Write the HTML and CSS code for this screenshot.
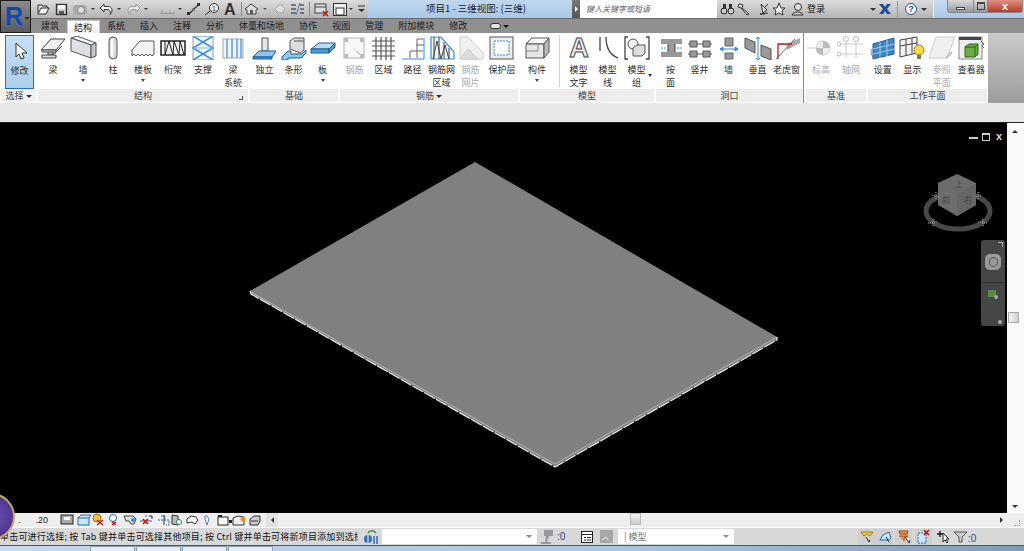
FILE: index.html
```html
<!DOCTYPE html>
<html>
<head>
    <title>项目1 - 三维视图: {三维}</title>
    <link rel="stylesheet" href="styles.css">
</head>
<body>
<div class="app">
    <div class="app-button"><span class="app-logo">R</span><span class="caret app-caret"></span></div>

    <div class="title-bar">
        <svg class="qat" width="334" height="18" viewBox="34 0 334 18">
            <path d="M38 13V5h4l1 1h4v2" fill="#ddd" stroke="#333"/><path d="M38 14l3-6h8l-3 6z" fill="#f2f2f2" stroke="#333"/>
            <rect x="56.500" y="4.500" width="10" height="10" fill="#ccc" stroke="#333" stroke-width="1.400"/><rect x="58" y="5" width="7" height="4" fill="#fff"/><rect x="59" y="11" width="5" height="3" fill="#555"/>
            <path d="M75 5h10l2 3v5l-2 2H75l-2-3V7z" fill="#aaa"/><circle cx="81" cy="10" r="3.500" fill="#ddd" stroke="#888"/>
            <polygon points="91,8 95,8 93,10" fill="#333"/>
            <path d="M100 8l4-4v2.500h4c4 0 5 4 3 7l-1 1c1-3 0-5-3-5h-3V12z" fill="#fff" stroke="#333"/>
            <polygon points="117,8 121,8 119,10" fill="#333"/>
            <path d="M140 8l-4-4v2.500h-4c-4 0-5 4-3 7l1 1c-1-3 0-5 3-5h3V12z" fill="#e6e6e6" stroke="#999"/>
            <polygon points="144,8 148,8 146,10" fill="#333"/>
            <path d="M160 13.500h15M162 13.500v-3M166 13.500v-2M170 13.500v-3M174 13.500v-2" stroke="#999" fill="none"/>
            <polygon points="178,8 182,8 180,10" fill="#333"/>
            <path d="M189 14l10-10" stroke="#333" stroke-width="1.200"/><rect x="187" y="12" width="3" height="3" fill="#333"/><rect x="197" y="3" width="3" height="3" fill="#333"/><path d="M192 8l3 3" stroke="#777"/>
            <circle cx="214" cy="8" r="4.500" fill="#eee" stroke="#333"/><path d="M210 11l-5 4" stroke="#333"/><text x="212" y="11" class="svg-small">1</text>
            <text x="224" y="15" class="qat-a">A</text>
            <path d="M241.500 2v14" stroke="#888"/>
            <path d="M245 9l6-5 7 5-2 1v4h-9v-4z" fill="#ddd" stroke="#444"/><rect x="250" y="10" width="3" height="4" fill="#555"/>
            <polygon points="263,8 267,8 265,10" fill="#555"/>
            <path d="M275 9l4-4h3l3 4-3 4h-3z" fill="#ddd" stroke="#aaa"/>
            <path d="M291 5h5M291 9h5M291 13h5M300 5h4M300 9h4M300 13h4" stroke="#222"/><path d="M296 15l4-12" stroke="#2f7fd0"/>
            <path d="M309.500 2v14" stroke="#888"/>
            <rect x="315" y="4" width="11" height="9" fill="#ddd" stroke="#444"/><path d="M315 7h11" stroke="#444"/><path d="M323 11l5 5m0-5l-5 5" stroke="#c01010" stroke-width="1.400"/>
            <rect x="333.500" y="3.500" width="13" height="12" fill="#eee" stroke="#333"/><rect x="336" y="8" width="8" height="7" fill="#fff" stroke="#333"/>
            <polygon points="349,8 353,8 351,10" fill="#333"/>
            <path d="M358 6h7" stroke="#333"/><polygon points="358,9 365,9 361.500,12" fill="#333"/>
        </svg>

        <div class="doc-title">项目1 - 三维视图: {三维}</div>

        <div class="search">
            <span class="search-arrow"></span>
            <span class="search-input">键入关键字或短语</span>
        </div>

        <div class="infocenter">
            <svg width="88" height="18" viewBox="717 0 88 18">
                <circle cx="724" cy="11" r="3" fill="#ccc" stroke="#222"/><circle cx="731" cy="11" r="3" fill="#ccc" stroke="#222"/><rect x="723" y="4" width="3" height="5" fill="#333"/><rect x="729" y="4" width="3" height="5" fill="#333"/>
                <path d="M740 4l3 1-1 3 7 6-2 1-6-7-3-1 1-3z" fill="#ddd" stroke="#333"/>
                <path d="M761 4l6 6-4 3zM765 14h-5l8-1M768 4l-3 3" fill="#ddd" stroke="#333"/>
                <polygon points="779,3 781,8 785,8 782,11 783,15 779,13 775,15 776,11 773,8 777,8" fill="#eee" stroke="#333"/>
                <circle cx="798" cy="7" r="3.500" fill="#ddd" stroke="#333"/><path d="M792 15c1-4 10-4 11 0z" fill="#ccc" stroke="#333"/>
            </svg>
            <span class="login">登录</span>
            <span class="caret login-caret"></span>
            <svg class="exchange" width="14" height="12" viewBox="0 0 14 12"><path d="M1 1h4l2 3 2-3h4L9 6l4 5H9L7 8l-2 3H1l4-5z" fill="#1e4c96"/></svg>
            <span class="info-sep"></span>
            <span class="help">?</span>
            <span class="caret help-caret"></span>
        </div>

        <div class="window-area">
            <div class="win-btn win-min"><span></span></div>
            <div class="win-btn win-max"><span></span></div>
            <div class="win-btn win-close">x</div>
        </div>
    </div>

    <div class="tab-bar">
        <div class="tab">建筑</div>
        <div class="tab tab-active">结构</div>
        <div class="tab">系统</div>
        <div class="tab">插入</div>
        <div class="tab">注释</div>
        <div class="tab">分析</div>
        <div class="tab">体量和场地</div>
        <div class="tab">协作</div>
        <div class="tab">视图</div>
        <div class="tab">管理</div>
        <div class="tab">附加模块</div>
        <div class="tab">修改</div>
        <div class="tab-toggle"><span class="toggle-pill"></span><span class="caret toggle-caret"></span></div>
    </div>

    <div class="ribbon">
        <section class="panel panel-select">
            <div class="tools">
                <div class="tool tool-modify">
                    <svg width="28" height="24" viewBox="0 0 28 24"><path d="M10 6v14l3-3 2 5 3-1-2-5h5z" fill="#fff" stroke="#333"/></svg>
                    <span class="tool-label">修改</span>
                </div>
            </div>
            <div class="panel-label">选择 <span class="caret"></span></div>
        </section>

        <section class="panel panel-struct">
            <div class="tools">
                <div class="tool">
                    <svg width="28" height="24" viewBox="0 0 28 24"><path d="M2 14l10-11h14l-9 11z" fill="#eee" stroke="#444"/><path d="M9 14h5v5h-5z" fill="#bbb" stroke="#444"/><path d="M3 14h14v2H3zM3 19h14v3H3z" fill="#ddd" stroke="#444"/><path d="M14 19l9-9" stroke="#444"/></svg>
                    <span class="tool-label">梁</span>
                </div>
                <div class="tool">
                    <svg width="28" height="24" viewBox="0 0 28 24"><path d="M2 2l6-2 19 7-5 2z" fill="#f5f5f5" stroke="#555"/><path d="M2 2l20 7v13L2 15z" fill="#dde0e4" stroke="#555"/><path d="M22 9l5-2v13l-5 2z" fill="#c4c6ca" stroke="#555"/></svg>
                    <span class="tool-label">墙</span>
                    <span class="caret tool-caret"></span>
                </div>
                <div class="tool">
                    <svg width="28" height="24" viewBox="0 0 28 24"><rect x="10" y="1" width="8" height="22" rx="4" fill="#d9dce0" stroke="#555"/><rect x="12" y="3" width="2" height="18" fill="#fff"/></svg>
                    <span class="tool-label">柱</span>
                </div>
                <div class="tool">
                    <svg width="28" height="24" viewBox="0 0 28 24"><path d="M3 14l8-9h14v13l-2 2-2-2-2 2-2-2-2 2-2-2-2 2-2-2-2 2-2-2-2 2z" fill="#f2f2f2" stroke="#555"/></svg>
                    <span class="tool-label">楼板</span>
                    <span class="caret tool-caret"></span>
                </div>
                <div class="tool">
                    <svg width="28" height="24" viewBox="0 0 28 24"><rect x="2" y="5" width="24" height="14" fill="#f2f2f2" stroke="#222" stroke-width="1.500"/><path d="M6 5v14l4-14 4 14 1-14 5 14 1-14 4 14" fill="none" stroke="#222"/></svg>
                    <span class="tool-label">桁架</span>
                </div>
                <div class="tool">
                    <svg width="28" height="24" viewBox="0 0 28 24"><rect x="4" y="0" width="20" height="24" fill="#f6f6f6" stroke="#999"/><path d="M4 0l20 12L4 24M24 0L4 12l20 12" fill="none" stroke="#2f8fe8" stroke-width="1.500"/><path d="M4 0h20M4 12h20" stroke="#7fb8ee"/></svg>
                    <span class="tool-label">支撑</span>
                </div>
                <div class="tool">
                    <svg width="28" height="24" viewBox="0 0 28 24"><rect x="4" y="3" width="20" height="19" fill="#f2f2f2" stroke="#aaa"/><path d="M8 3v19M13 3v19M18 3v19M22 3v19" stroke="#2f8fe8" stroke-width="1.200"/></svg>
                    <span class="tool-label">梁<br>系统</span>
                </div>
                <span class="launcher"></span>
            </div>
            <div class="panel-label">结构</div>
        </section>

        <section class="panel panel-found">
            <div class="tools">
                <div class="tool tool-small">
                    <svg width="28" height="24" viewBox="0 0 28 24"><rect x="11" y="2" width="6" height="13" fill="#e6e6e6" stroke="#555"/><path d="M2 21l6-6h17l-4 6z" fill="#8ec6ee" stroke="#1c5d96"/><path d="M2 21h19v2H2z" fill="#4f9bd8" stroke="#1c5d96"/></svg>
                    <span class="tool-label">独立</span>
                </div>
                <div class="tool tool-small">
                    <svg width="28" height="24" viewBox="0 0 28 24"><path d="M10 13V5l4-3h10v12l-4 3z" fill="#ddd" stroke="#555"/><path d="M14 5h10" stroke="#555"/><path d="M2 21l6-6h3v3h11l4-4v3l-5 5H8v2H2z" fill="#8ec6ee" stroke="#1c5d96"/></svg>
                    <span class="tool-label">条形</span>
                </div>
                <div class="tool tool-small">
                    <svg width="28" height="24" viewBox="0 0 28 24"><path d="M2 13l8-6h16l-6 6z" fill="#b9dcf3" stroke="#1c5d96"/><path d="M2 13h18v4H2zM20 13l6-6v4l-6 6z" fill="#4f9bd8" stroke="#1c5d96"/></svg>
                    <span class="tool-label">板</span>
                    <span class="caret tool-caret"></span>
                </div>
            </div>
            <div class="panel-label">基础</div>
        </section>

        <section class="panel panel-rebar">
            <div class="tools">
                <div class="tool tool-small tool-off">
                    <svg width="28" height="24" viewBox="0 0 28 24"><rect x="3" y="2" width="20" height="20" fill="#f8f8f8" stroke="#ccc" stroke-width="1.500"/><path d="M3 2h4v4H3zM19 2h4v4h-4zM3 18h4v4H3zM19 18h4v4h-4z" fill="#bbb"/><path d="M12 12l8 8M16 15l3 3" stroke="#ccc"/></svg>
                    <span class="tool-label">钢筋</span>
                </div>
                <div class="tool tool-small">
                    <svg width="28" height="24" viewBox="0 0 28 24"><path d="M2 5h23M2 10h23M2 15h23M2 20h23M6 1v23M11 1v23M16 1v23M21 1v23" stroke="#555" stroke-width="1.200"/></svg>
                    <span class="tool-label">区域</span>
                </div>
                <div class="tool tool-small">
                    <svg width="28" height="24" viewBox="0 0 28 24"><path d="M3 23h22V2" fill="none" stroke="#2f8fe8"/><path d="M11 22v-7M11 15h13M17 9h8M18 22V3M24 3h-6" stroke="#666" fill="none"/></svg>
                    <span class="tool-label">路径</span>
                </div>
                <div class="tool tool-small">
                    <svg width="28" height="24" viewBox="0 0 28 24"><path d="M3 1h10l13 15v7H3z" fill="#eef4fa" stroke="#2f8fe8" stroke-width="1.200"/><path d="M6 1v22M11 1v22M16 6v17M21 12v11M5 23l4-18 4 18 4-14 4 14" fill="none" stroke="#444"/></svg>
                    <span class="tool-label">钢筋网<br>区域</span>
                </div>
                <div class="tool tool-small tool-off">
                    <svg width="28" height="24" viewBox="0 0 28 24"><path d="M3 1h8l15 16v6H3z" fill="#f0f0f0" stroke="#ccc"/><path d="M3 23l8-10 10 10z" fill="#ddd" stroke="#ccc"/></svg>
                    <span class="tool-label">钢筋<br>网片</span>
                </div>
                <div class="tool tool-cover">
                    <svg width="28" height="24" viewBox="0 0 28 24"><rect x="2" y="1" width="23" height="22" fill="#eee" stroke="#555"/><rect x="6" y="5" width="15" height="14" fill="#fbfbfb" stroke="#2f8fe8" stroke-dasharray="2 1"/></svg>
                    <span class="tool-label">保护层</span>
                </div>
            </div>
            <div class="panel-label">钢筋 <span class="caret"></span></div>
        </section>

        <section class="panel panel-model">
            <div class="tools">
                <div class="tool tool-comp">
                    <svg width="28" height="24" viewBox="0 0 28 24"><path d="M3 8l6-6h17l-5 6z" fill="#fafafa" stroke="#555"/><path d="M3 8h18v14H3z" fill="#e6e6e6" stroke="#555"/><path d="M21 8l5-6v14l-5 6z" fill="#bbb" stroke="#555"/><path d="M15 8v7H3" fill="none" stroke="#888"/></svg>
                    <span class="tool-label">构件</span>
                    <span class="caret tool-caret"></span>
                </div>
                <span class="tool-sep"></span>
                <div class="tool tool-small">
                    <svg width="28" height="24" viewBox="0 0 28 24"><text x="14" y="21" class="model-a">A</text></svg>
                    <span class="tool-label">模型<br>文字</span>
                </div>
                <div class="tool tool-small">
                    <svg width="28" height="24" viewBox="0 0 28 24"><path d="M6 1v14M12 1c0 12 4 18 12 21" fill="none" stroke="#444" stroke-width="1.300"/></svg>
                    <span class="tool-label">模型<br>线</span>
                </div>
                <div class="tool tool-small">
                    <svg width="28" height="24" viewBox="0 0 28 24"><path d="M5 1H2v22h3M23 1h3v22h-3" fill="none" stroke="#444" stroke-width="1.300"/><circle cx="10" cy="8" r="5" fill="#eee" stroke="#555"/><path d="M10 12l4-3h8v8l-3 3h-9z" fill="#ddd" stroke="#555"/></svg>
                    <span class="tool-label">模型<br>组</span>
                </div>
                <span class="caret group-caret"></span>
            </div>
            <div class="panel-label">模型</div>
        </section>

        <section class="panel panel-open">
            <div class="tools">
                <div class="tool tool-small">
                    <svg width="28" height="24" viewBox="0 0 28 24"><path d="M4 3h21v5h-7v8h7v5H4v-5h7V8H4z" fill="#999"/><path d="M11 8v8M18 8v8" stroke="#444"/><path d="M4 12h5M20 12h5" stroke="#2f8fe8" stroke-dasharray="2 1"/></svg>
                    <span class="tool-label">按<br>面</span>
                </div>
                <div class="tool tool-small">
                    <svg width="28" height="24" viewBox="0 0 28 24"><path d="M2 8h24M2 18h24" stroke="#555"/><path d="M4 5h7v6H4zM17 5h7v6h-7zM4 15h7v6H4zM17 15h7v6h-7z" fill="#999" stroke="#555"/></svg>
                    <span class="tool-label">竖井</span>
                </div>
                <div class="tool tool-small">
                    <svg width="28" height="24" viewBox="0 0 28 24"><path d="M10 2h8v8h-8zM10 17h8v6h-8z" fill="#999" stroke="#666"/><path d="M5 13h18M5 13l3-2v4zM23 13l-3-2v4z" stroke="#2f8fe8" fill="#2f8fe8"/></svg>
                    <span class="tool-label">墙</span>
                </div>
                <div class="tool tool-small">
                    <svg width="28" height="24" viewBox="0 0 28 24"><path d="M1 2l10 4v11L1 12zM17 9l10 4v11l-10-4z" fill="#999" stroke="#555"/><path d="M14 1v23M12 3l2-2 2 2M12 22l2 2 2-2" fill="none" stroke="#2f8fe8"/></svg>
                    <span class="tool-label">垂直</span>
                </div>
                <div class="tool tool-small">
                    <svg width="28" height="24" viewBox="0 0 28 24"><path d="M6 6h3v16H6z" fill="#fff"/><path d="M14 8l13-6v5L14 14z" fill="#aaa"/><path d="M5 23V8h14" fill="none" stroke="#b81818" stroke-width="1.300"/><path d="M3 23L22 3" stroke="#666"/></svg>
                    <span class="tool-label">老虎窗</span>
                </div>
            </div>
            <div class="panel-label">洞口</div>
        </section>

        <section class="panel panel-datum">
            <div class="tools">
                <div class="tool tool-off">
                    <svg width="28" height="24" viewBox="0 0 28 24"><path d="M0 12h8" stroke="#ccc"/><circle cx="16" cy="12" r="7" fill="#eee" stroke="#ccc"/><path d="M16 5a7 7 0 0 1 7 7h-7zM16 12h-7a7 7 0 0 0 7 7z" fill="#bbb"/></svg>
                    <span class="tool-label">标高</span>
                </div>
                <div class="tool tool-off">
                    <svg width="28" height="24" viewBox="0 0 28 24"><path d="M2 8h24M2 18h24M9 4v18M19 4v18" stroke="#ccc"/><circle cx="9" cy="3" r="2.500" fill="#fff" stroke="#bbb"/><circle cx="19" cy="3" r="2.500" fill="#fff" stroke="#bbb"/><circle cx="2" cy="8" r="2" fill="#fff" stroke="#bbb"/><circle cx="2" cy="18" r="2" fill="#fff" stroke="#bbb"/></svg>
                    <span class="tool-label">轴网</span>
                </div>
            </div>
            <div class="panel-label">基准</div>
        </section>

        <section class="panel panel-work">
            <div class="tools">
                <div class="tool tool-plane">
                    <svg width="28" height="24" viewBox="0 0 28 24"><path d="M4 8l21-6v16L4 23z" fill="#3f86c8" stroke="#1c5d96"/><path d="M11 6v16M18 4v16M4 13l21-5M4 18l21-5" stroke="#a6cdec"/><path d="M2 13c0 4 1 9 4 10" stroke="#888" fill="none"/></svg>
                    <span class="tool-label">设置</span>
                </div>
                <div class="tool tool-plane">
                    <svg width="28" height="24" viewBox="0 0 28 24"><path d="M2 4l17-3v16L2 21z" fill="#f2f2f2" stroke="#444"/><path d="M8 3v17M14 2v16M2 10l17-3" stroke="#444"/><circle cx="21" cy="14" r="5" fill="#f6d84a" stroke="#9a8a1e"/><rect x="19" y="19" width="4" height="4" fill="#777"/></svg>
                    <span class="tool-label">显示</span>
                </div>
                <div class="tool tool-plane tool-off">
                    <svg width="28" height="24" viewBox="0 0 28 24"><path d="M8 1h19l-8 21H1z" fill="#f0f0f0" stroke="#ccc"/><path d="M18 22l6-6" stroke="#bbb" stroke-width="2"/></svg>
                    <span class="tool-label">参照<br>平面</span>
                </div>
                <div class="tool tool-plane">
                    <svg width="28" height="24" viewBox="0 0 28 24"><rect x="2" y="1" width="23" height="22" fill="#eee" stroke="#888"/><path d="M2 1h22v3H2z" fill="#444"/><path d="M8 11l4-3h9v10l-3 3H8z" fill="#69ae44" stroke="#2c6518"/><path d="M8 11h10v10M18 11l3-3" stroke="#2c6518" fill="none"/><path d="M24 5l3 3-2 2 2 2" stroke="#666" fill="none"/></svg>
                    <span class="tool-label">查看器</span>
                </div>
            </div>
            <div class="panel-label">工作平面</div>
        </section>
        <div class="ribbon-rest"></div>
    </div>

    <div class="ribbon-foot"></div>

    <div class="work-area">
        <div class="canvas">
            <svg class="plate" width="1007" height="390" viewBox="0 123 1007 390">
                <polygon points="475,162 777,337 777,340 555,467 251,294 250,291" fill="#808080"/>
                <path d="M250 291l1 3 304 173 222-127v-3" fill="none" stroke="#e8e8e8" stroke-width="1.200" stroke-dasharray="12 1.500"/>
                <path d="M251 292l304 172 222-127" fill="none" stroke="#fff" stroke-opacity=".4"/>
            </svg>

            <div class="view-controls">
                <span class="vc-min"></span>
                <span class="vc-max"></span>
                <span class="vc-close">x</span>
            </div>

            <svg class="view-cube" width="76" height="72" viewBox="0 0 76 72">
                <ellipse cx="36" cy="40" rx="32" ry="18" fill="none" stroke="#484848" stroke-width="5"/>
                <polygon points="35,3 54,12 54,34 35,45 16,34 16,12" fill="#6c6c6c"/>
                <polygon points="35,24 54,12 54,34 35,45" fill="#656565"/>
                <text x="33" y="16" class="cube-text">上</text>
                <text x="20" y="32" class="cube-text">前</text>
                <text x="42" y="32" class="cube-text">右</text>
                <path d="M10 24l8 2M14 21v7M52 26l8-2M56 21v7M6 52l10-1M11 48v7M56 51l10 1M61 48v7" stroke="#999" stroke-width="1.200" stroke-dasharray="1 1"/>
            </svg>

            <div class="nav-bar">
                <span class="nav-corner"></span>
                <span class="nav-wheel"><span></span></span>
                <span class="nav-sep"></span>
                <span class="nav-zoom"></span>
                <span class="nav-foot"></span>
            </div>
        </div>
        <div class="v-scroll">
            <span class="arrow-up"></span>
            <span class="v-thumb"></span>
            <span class="arrow-down"></span>
        </div>
    </div>

    <div class="view-bar">
        <span class="scale">.      .20</span>
        <svg class="view-icons" width="204" height="14" viewBox="60 0 204 14">
            <rect x="61" y="2" width="12" height="9" fill="#aaa" stroke="#222"/><rect x="64" y="4" width="6" height="3" fill="#fff"/>
            <path d="M78 5l3-3h10l-2 3v7H78z" fill="#cfe4f5" stroke="#1f6cb0"/><path d="M78 5h11" stroke="#1f6cb0"/>
            <circle cx="97" cy="5" r="4" fill="#f4c23c" stroke="#a06a10"/><path d="M97 7l6 5m0-5l-6 5" stroke="#c01010" stroke-width="1.400"/>
            <circle cx="113" cy="5" r="3.500" fill="#fff" stroke="#2a62b0"/><path d="M112 9l4 3m0-3l-4 3" stroke="#c01010" stroke-width="1.300"/>
            <path d="M124 3h9l3 3-2 5h-3l-2-3h-3z" fill="#ddd" stroke="#444"/><circle cx="133" cy="7" r="2" fill="#2f8fe8"/>
            <path d="M140 8h12M146 2v2" stroke="#1f6cb0"/><path d="M143 6l5 5m0-5l-5 5" stroke="#c01010" stroke-width="1.500"/><path d="M149 3h3v3" stroke="#222" fill="none"/>
            <path d="M158 7h11v5h-3M161 3h4v3" stroke="#1f6cb0" fill="none" stroke-dasharray="2 1"/><path d="M164 2v10" stroke="#333"/>
            <path d="M172 2l6 1v9l-6-1z" fill="#bbb" stroke="#333"/><circle cx="179" cy="9" r="2.500" fill="#fff" stroke="#2a8060"/>
            <path d="M187 6l4-3 5 1 2 3-3 4-3-2-5 1z" fill="#fff" stroke="#333"/>
            <path d="M205 3l2 0 2 3-2 6-2-6z" fill="#fff" stroke="#5580b0"/>
            <rect x="218" y="4" width="10" height="8" fill="#fff" stroke="#222"/><rect x="218" y="2" width="4" height="2" fill="#222"/><rect x="229" y="7" width="3" height="3" fill="#222"/>
            <path d="M233 5l5-2 6 1v8h-11z" fill="#eee" stroke="#333"/><circle cx="243" cy="6" r="2.500" fill="#f09020"/>
            <path d="M250 6l4-3h6v5l-2 4h-8z" fill="#ccc" stroke="#333"/><path d="M251 8h7" stroke="#333"/>
        </svg>
        <span class="view-bar-box"><span class="view-bar-arrow"></span></span>
        <div class="h-scroll">
            <span class="h-thumb"></span>
            <span class="arrow-right"></span>
            <span class="grip"></span>
        </div>
    </div>

    <div class="status-bar">
        <div class="status-text">单击可进行选择; 按 Tab 键并单击可选择其他项目; 按 Ctrl 键并单击可将新项目添加到选择</div>
        <svg class="status-icon" width="16" height="16" viewBox="0 0 16 16"><circle cx="5" cy="10" r="4" fill="#2f6fb8"/><path d="M5 6v8" stroke="#fff"/><path d="M11 7v8M14 7v8" stroke="#2f6fb8" stroke-width="1.500"/><path d="M5 4c2-3 6-3 8 0" stroke="#3a9030" fill="none" stroke-width="1.500"/></svg>
        <div class="status-combo"><span class="caret grey-caret"></span></div>
        <div class="status-count">
            <svg width="16" height="16" viewBox="0 0 16 16"><path d="M4 1h9v6H9l-2 6h4v2H1v-2h4l1-6H4z" fill="#999"/></svg>
            <span class="count-text">:0</span>
        </div>
        <svg class="status-table" width="12" height="14" viewBox="0 0 12 14"><rect x=".5" y="1.500" width="11" height="11" fill="#fff" stroke="#222"/><path d="M1 4.500h10M3 7.500h2M6 7.500h4M3 10h2M6 10h4" stroke="#222"/></svg>
        <svg class="status-grey" width="13" height="13" viewBox="0 0 13 13"><rect width="13" height="13" fill="#a8a8a8"/><path d="M2 10l4-3 2 3" stroke="#eee" fill="none"/></svg>
        <div class="status-model"><span class="model-bar">|</span> 模型<span class="caret grey-caret"></span></div>
        <svg class="status-right" width="112" height="18" viewBox="858 0 112 18">
            <rect x="858" y="1" width="18" height="16" fill="#cfcfcf"/><rect x="876" y="1" width="17" height="16" fill="#cfcfcf"/><rect x="895" y="1" width="17" height="16" fill="#cfcfcf"/><rect x="915" y="1" width="17" height="16" fill="#cfcfcf"/><rect x="935" y="1" width="17" height="16" fill="#d8d8d8"/>
            <path d="M861 4h12l-3 4-3-2-3 2z" fill="#f4d040" stroke="#a08010"/><path d="M866 9l3 5 1-2" stroke="#222" fill="none"/>
            <path d="M880 12h9l2-2-2-6-6 3z" fill="#cfe4f5" stroke="#1f6cb0"/><path d="M886 9l3 5" stroke="#222"/>
            <path d="M899 3h9l-1 3h-7zM899 8h9l-4 2v3" fill="#f09040" stroke="#a04010"/><path d="M905 9l4 6 1-3" fill="#fff" stroke="#222"/>
            <path d="M918 5h8v10h-8z" fill="#cfe4f5" stroke="#1f6cb0" stroke-dasharray="2 1"/><path d="M924 2l5 5m0-5l-5 5" stroke="#c01010" stroke-width="1.500"/>
            <path d="M937 6h6M940 3v6" stroke="#111" stroke-width="1.300"/><path d="M943 5v9l2-2 2 3 1-1-2-3h3z" fill="#fff" stroke="#222"/>
            <path d="M954 4h13l-5 5v5h-3V9z" fill="#ccc" stroke="#555"/>
        </svg>
        <span class="status-filter">:0</span>
    </div>

    <div class="task-bar">
        <span class="task-btn"></span>
        <span class="task-btn"></span>
        <span class="task-btn"></span>
        <span class="task-btn"></span>
    </div>

    <div class="start-orb"></div>
</div>
</body>
</html>
```

FILE: styles.css
```css
* {
    box-sizing: border-box;
}

html, body {
    margin: 0;
    padding: 0;
    height: 100%;
    overflow: hidden;
}

body {
    font-family: "Noto Sans CJK SC", "Liberation Sans", sans-serif;
    font-size: 9px;
    color: #333;
}

svg {
    display: block;
    flex: none;
}

svg text {
    font-family: "Liberation Sans", sans-serif;
}

.svg-small {
    font-size: 7px;
    fill: #333;
}

.qat-a {
    font-size: 16px;
    font-weight: bold;
    fill: #333;
}

.model-a {
    font-size: 27px;
    font-weight: bold;
    fill: #eee;
    stroke: #444;
    stroke-width: 1;
    text-anchor: middle;
}

.cube-text {
    font-family: "Noto Sans CJK SC", sans-serif;
    font-size: 8px;
    fill: #444;
}

.app {
    position: relative;
    width: 1024px;
    height: 551px;
    display: flex;
    flex-direction: column;
    overflow: hidden;
}

.caret {
    display: inline-block;
    width: 0;
    height: 0;
    border-left: 3px solid transparent;
    border-right: 3px solid transparent;
    border-top: 3px solid #333;
    vertical-align: middle;
}

/* title bar */
.title-bar {
    height: 18px;
    flex: none;
    display: flex;
    padding-left: 34px;
    background: linear-gradient(#dcdcdc, #b4b4b4);
}

.app-button {
    position: absolute;
    left: 0;
    top: 0;
    z-index: 2;
    width: 31px;
    height: 33px;
    background: linear-gradient(#8c8c8c, #5a5a5a);
    border: 1px solid #1c1c1c;
    display: flex;
    align-items: center;
    padding-left: 4px;
}

.app-logo {
    font-family: "Liberation Sans", sans-serif;
    font-weight: bold;
    font-size: 25px;
    line-height: 25px;
    color: #1148b8;
}

.app-caret {
    margin-left: 1px;
    margin-top: 4px;
}

.doc-title {
    width: 204px;
    height: 18px;
    background: linear-gradient(#c0d7ee, #a9c8e4);
    font-size: 9.5px;
    line-height: 17px;
    padding-left: 58px;
    color: #222;
    white-space: nowrap;
}

.search {
    width: 145px;
    display: flex;
    background: linear-gradient(#777, #555);
}

.search-arrow {
    width: 8px;
    position: relative;
}

.search-arrow::after {
    content: "";
    position: absolute;
    left: 3px;
    top: 6px;
    border-left: 3px solid #eee;
    border-top: 3px solid transparent;
    border-bottom: 3px solid transparent;
}

.search-input {
    flex: 1;
    background: #fff;
    font-style: italic;
    color: #666;
    font-size: 8px;
    line-height: 17px;
    padding-left: 6px;
}

.infocenter {
    width: 216px;
    display: flex;
    align-items: center;
}

.login {
    margin-left: 2px;
    width: 18px;
    color: #111;
    line-height: 16px;
}

.login-caret {
    margin-left: 45px;
}

.exchange {
    margin-left: 2px;
}

.info-sep {
    width: 1px;
    height: 16px;
    background: #999;
    margin-left: 5px;
}

.help {
    width: 12px;
    height: 12px;
    margin-left: 7px;
    border: 1px solid #1e4c96;
    border-radius: 50%;
    background: #fff;
    color: #1e4c96;
    font-family: "Liberation Sans", sans-serif;
    font-weight: bold;
    font-size: 9px;
    line-height: 10px;
    text-align: center;
}

.help-caret {
    margin-left: 4px;
}

.window-area {
    flex: 1;
    display: flex;
    align-items: flex-start;
    padding-left: 13px;
    background: linear-gradient(#c6dcf0, #a9c8e4);
    border-left: 1px solid #e6f0f8;
}

.win-btn {
    height: 13px;
    display: flex;
    align-items: center;
    justify-content: center;
    border: 1px solid #7c8a98;
    border-top: none;
    background: linear-gradient(#d8d8d8, #989898);
}

.win-min {
    width: 27px;
    border-radius: 0 0 0 3px;
}

.win-min span {
    width: 9px;
    height: 3px;
    margin-top: 5px;
    border: 1px solid #444;
    background: #fff;
}

.win-max {
    width: 14px;
    border-left: none;
}

.win-max span {
    width: 8px;
    height: 8px;
    border: 1px solid #444;
    border-top-width: 2px;
}

.win-close {
    width: 35px;
    background: linear-gradient(#e09080, #b83a28);
    border-left: none;
    border-radius: 0 0 3px 0;
    color: #fff;
    font-family: "Liberation Sans", sans-serif;
    font-weight: bold;
    font-size: 11px;
    line-height: 11px;
}

/* tabs */
.tab-bar {
    height: 15px;
    flex: none;
    display: flex;
    padding-left: 33.5px;
    background: #8f8f8f;
    border-top: 1px solid #6e6e6e;
    color: #1c1c1c;
}

.tab {
    padding: 0 7.5px;
    line-height: 14px;
    white-space: nowrap;
}

.tab-active {
    margin-top: 1px;
    background: linear-gradient(#fff, #f2f2f2);
    line-height: 13px;
    border: 1px solid #c8c8c8;
    border-bottom: none;
    padding: 0 6.5px;
}

.tab-toggle {
    margin-left: 15px;
    display: flex;
    align-items: center;
    gap: 2px;
}

.toggle-pill {
    width: 11px;
    height: 6px;
    border: 1px solid #333;
    border-radius: 3px;
    background: #e6e6e6;
}

.toggle-caret {
    border-top-color: #111;
}

/* ribbon */
.ribbon {
    height: 70px;
    flex: none;
    display: flex;
    gap: 2px;
    padding-left: 1px;
    background: #fff;
}

.panel {
    display: flex;
    flex-direction: column;
}

.panel-select { width: 35px; }
.panel-struct { width: 210px; }
.panel-found { width: 88px; }
.panel-rebar { width: 178px; }
.panel-model { width: 134px; }
.panel-open { width: 148px; }
.panel-datum { width: 60px; }
.panel-work { width: 119px; }

.tools {
    height: 56px;
    display: flex;
    position: relative;
}

.tool {
    width: 30px;
    padding-top: 3px;
    display: flex;
    flex-direction: column;
    align-items: center;
    flex: none;
}

.tool-small { width: 29px; }
.tool-plane { width: 29.5px; }
.tool-cover { width: 34px; }
.tool-comp { width: 34px; }

.tool-label {
    margin-top: 3px;
    line-height: 13px;
    text-align: center;
    white-space: nowrap;
    color: #2c2c2c;
}

.tool-off .tool-label {
    color: #aaa;
}

.tool-caret {
    margin-top: 3px;
    border-left-width: 2px;
    border-right-width: 2px;
    border-top-color: #444;
}

.group-caret {
    position: absolute;
    right: 2px;
    top: 41px;
    border-left-width: 2px;
    border-right-width: 2px;
}

.tool-sep {
    width: 1px;
    height: 52px;
    margin: 2px 4px 0 5px;
    background: #d4d4d4;
}

.tool-modify {
    width: 29px;
    height: 54px;
    margin: 2px 0 0 4px;
    padding-top: 1px;
    background: linear-gradient(#c6dff5, #acd0f0);
    border: 1px solid #2a6fb3;
}

.launcher {
    position: absolute;
    right: 5px;
    bottom: -11px;
    width: 4px;
    height: 4px;
    border-right: 1px solid #555;
    border-bottom: 1px solid #555;
}

.panel-label {
    height: 13px;
    background: #ededed;
    text-align: center;
    line-height: 13px;
    color: #444;
    white-space: nowrap;
}

.panel-select .panel-label {
    background: #f0f0f0;
}

.panel-open {
    border-right: 1px solid #888;
}

.ribbon-rest {
    flex: 1;
    margin-left: -1px;
    background: linear-gradient(#cacaca, #9c9c9c);
}

.ribbon-foot {
    height: 20px;
    flex: none;
    background: #e8e8e8;
    border-bottom: 1px solid #222;
}

/* drawing area */
.work-area {
    height: 390px;
    flex: none;
    display: flex;
}

.canvas {
    position: relative;
    width: 1007px;
    background: #000;
}

.plate {
    position: absolute;
    left: 0;
    top: 0;
}

.view-controls {
    position: absolute;
    left: 969px;
    top: 9px;
    width: 36px;
    height: 9px;
    display: flex;
    align-items: center;
    gap: 4px;
}

.vc-min {
    width: 9px;
    height: 2px;
    margin-top: 3px;
    background: #ccc;
}

.vc-max {
    width: 8px;
    height: 8px;
    border: 1px solid #ccc;
    border-top-width: 2px;
}

.vc-close {
    margin-left: 2px;
    color: #ddd;
    font-family: "Liberation Sans", sans-serif;
    font-weight: bold;
    font-size: 11px;
    line-height: 9px;
}

.view-cube {
    position: absolute;
    left: 922px;
    top: 48px;
}

.nav-bar {
    position: absolute;
    left: 981px;
    top: 117px;
    width: 24px;
    height: 86px;
    border-radius: 3px;
    background: #464646;
    display: flex;
    flex-direction: column;
    align-items: center;
}

.nav-corner {
    align-self: flex-end;
    width: 5px;
    height: 5px;
    margin: 2px 2px 0 0;
    border-top: 1px solid #aaa;
    border-right: 1px solid #aaa;
}

.nav-wheel {
    width: 16px;
    height: 16px;
    margin-top: 7px;
    border-radius: 5px;
    background: #9a9a9a;
    display: flex;
    align-items: center;
    justify-content: center;
}

.nav-wheel span {
    width: 9px;
    height: 10px;
    border: 1px solid #555;
    border-radius: 50%;
}

.nav-sep {
    width: 20px;
    height: 1px;
    margin-top: 12px;
    background: #2c2c2c;
}

.nav-zoom {
    position: relative;
    width: 8px;
    height: 7px;
    margin-top: 7px;
    margin-right: 3px;
    background: #5b8a4a;
}

.nav-zoom::after {
    content: "";
    position: absolute;
    left: 6px;
    top: 5px;
    width: 4px;
    height: 4px;
    border-radius: 50%;
    background: #aaa;
}

.nav-foot {
    align-self: flex-end;
    width: 4px;
    height: 4px;
    margin: auto 3px 2px 0;
    border-radius: 50%;
    background: #aaa;
}

.v-scroll {
    flex: 1;
    position: relative;
    background: #fafafa;
}

.arrow-up, .arrow-down {
    position: absolute;
    left: 5px;
    border-left: 3px solid transparent;
    border-right: 3px solid transparent;
}

.arrow-up {
    top: 7px;
    border-bottom: 3px solid #333;
}

.arrow-down {
    top: 382px;
    border-top: 3px solid #333;
}

.v-thumb {
    position: absolute;
    left: 1px;
    top: 189px;
    width: 11px;
    height: 11px;
    background: linear-gradient(90deg, #f4f4f4, #d0d0d0);
    border: 1px solid #aaa;
}

/* view control bar */
.view-bar {
    height: 14px;
    flex: none;
    display: flex;
    align-items: center;
    background: #eee;
}

.scale {
    width: 60px;
    padding-left: 18px;
    line-height: 14px;
    color: #222;
    font-family: "Liberation Sans", sans-serif;
    white-space: pre;
}

.view-bar-box {
    width: 12px;
    height: 14px;
    margin-left: 2px;
    background: #e2e2e2;
    display: flex;
    align-items: center;
    justify-content: center;
}

.view-bar-arrow {
    width: 0;
    height: 0;
    border-right: 3px solid #333;
    border-top: 3px solid transparent;
    border-bottom: 3px solid transparent;
}

.h-scroll {
    flex: 1;
    height: 14px;
    position: relative;
}

.h-thumb {
    position: absolute;
    left: 352px;
    top: 0;
    width: 11px;
    height: 12px;
    background: linear-gradient(#f4f4f4, #c8c8c8);
    border: 1px solid #bbb;
}

.arrow-right {
    position: absolute;
    left: 722px;
    top: 4px;
    border-left: 3px solid #333;
    border-top: 3px solid transparent;
    border-bottom: 3px solid transparent;
}

.grip {
    position: absolute;
    left: 736px;
    top: 7px;
    width: 6px;
    height: 6px;
    border-right: 1px dotted #999;
    border-bottom: 1px dotted #999;
}

/* status bar */
.status-bar {
    height: 19px;
    flex: none;
    display: flex;
    align-items: center;
    background: #d8d8d8;
    border-top: 1px solid #fafafa;
    border-bottom: 1px solid #555;
}

.status-text {
    width: 358px;
    margin-right: 5px;
    letter-spacing: .2px;
    overflow: hidden;
    white-space: nowrap;
    color: #111;
    line-height: 17px;
}

.status-icon {
    margin-right: 3px;
}

.status-combo {
    width: 155px;
    height: 15px;
    margin-right: 3px;
    background: #fff;
    display: flex;
    align-items: center;
    justify-content: flex-end;
    padding-right: 5px;
}

.grey-caret {
    border-top-color: #888;
}

.status-count {
    width: 38px;
    display: flex;
    align-items: center;
    gap: 1px;
    margin-right: 3px;
}

.count-text, .status-filter {
    color: #1f4c96;
    font-family: "Liberation Sans", sans-serif;
    font-size: 10px;
    line-height: 12px;
}

.status-table {
    margin-right: 7px;
}

.status-grey {
    margin-right: 5px;
}

.status-model {
    width: 116px;
    height: 15px;
    background: #fff;
    color: #777;
    padding: 0 5px 0 6px;
    line-height: 15px;
    display: flex;
    align-items: center;
    white-space: pre;
}

.model-bar {
    color: #2f6fb8;
}

.status-model .caret {
    margin-left: auto;
}

.status-right {
    margin-left: 124px;
}

.status-filter {
    margin-left: -2px;
    margin-top: 4px;
}

/* desktop behind the window */
.task-bar {
    flex: 1;
    display: flex;
    gap: 1px;
    padding-left: 90px;
    background: linear-gradient(90deg, #c4d9ee 0%, #a9c6e3 60%, #7f9db9 100%);
}

.task-btn {
    width: 45px;
    background: #e4edf6;
    border: 1px solid #8aa0b4;
    border-bottom: none;
}

.start-orb {
    position: absolute;
    left: -32px;
    top: 493px;
    width: 47px;
    height: 47px;
    border-radius: 50%;
    background: radial-gradient(circle at 60% 50%, #6a4cae, #3c2478);
    border: 2px solid #c4a868;
}
```
